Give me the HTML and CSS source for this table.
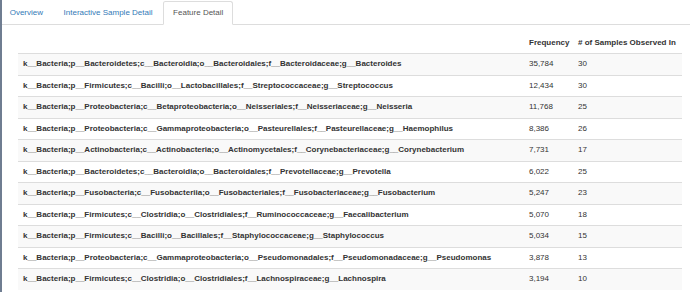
FILE: index.html
```html
<!DOCTYPE html>
<html>
<head>
<meta charset="utf-8">
<link rel="stylesheet" href="styles.css">
</head>
<body>
<div class="edge"></div>
<ul class="tabs">
  <li class="tab"><a href="#">Overview</a></li>
  <li class="tab"><a href="#">Interactive Sample Detail</a></li>
  <li class="tab active"><a href="#">Feature Detail</a></li>
</ul>
<div class="content">
  <table class="features">
    <colgroup>
      <col class="c-name">
      <col class="c-freq">
      <col class="c-samp">
    </colgroup>
    <thead>
      <tr><th></th><th>Frequency</th><th># of Samples Observed In</th></tr>
    </thead>
    <tbody>
      <tr><td class="name">k__Bacteria;p__Bacteroidetes;c__Bacteroidia;o__Bacteroidales;f__Bacteroidaceae;g__Bacteroides</td><td>35,784</td><td>30</td></tr>
      <tr><td class="name">k__Bacteria;p__Firmicutes;c__Bacilli;o__Lactobacillales;f__Streptococcaceae;g__Streptococcus</td><td>12,434</td><td>30</td></tr>
      <tr><td class="name">k__Bacteria;p__Proteobacteria;c__Betaproteobacteria;o__Neisseriales;f__Neisseriaceae;g__Neisseria</td><td>11,768</td><td>25</td></tr>
      <tr><td class="name">k__Bacteria;p__Proteobacteria;c__Gammaproteobacteria;o__Pasteurellales;f__Pasteurellaceae;g__Haemophilus</td><td>8,386</td><td>26</td></tr>
      <tr><td class="name">k__Bacteria;p__Actinobacteria;c__Actinobacteria;o__Actinomycetales;f__Corynebacteriaceae;g__Corynebacterium</td><td>7,731</td><td>17</td></tr>
      <tr><td class="name">k__Bacteria;p__Bacteroidetes;c__Bacteroidia;o__Bacteroidales;f__Prevotellaceae;g__Prevotella</td><td>6,022</td><td>25</td></tr>
      <tr><td class="name">k__Bacteria;p__Fusobacteria;c__Fusobacteriia;o__Fusobacteriales;f__Fusobacteriaceae;g__Fusobacterium</td><td>5,247</td><td>23</td></tr>
      <tr><td class="name">k__Bacteria;p__Firmicutes;c__Clostridia;o__Clostridiales;f__Ruminococcaceae;g__Faecalibacterium</td><td>5,070</td><td>18</td></tr>
      <tr><td class="name">k__Bacteria;p__Firmicutes;c__Bacilli;o__Bacillales;f__Staphylococcaceae;g__Staphylococcus</td><td>5,034</td><td>15</td></tr>
      <tr><td class="name">k__Bacteria;p__Proteobacteria;c__Gammaproteobacteria;o__Pseudomonadales;f__Pseudomonadaceae;g__Pseudomonas</td><td>3,878</td><td>13</td></tr>
      <tr><td class="name">k__Bacteria;p__Firmicutes;c__Clostridia;o__Clostridiales;f__Lachnospiraceae;g__Lachnospira</td><td>3,194</td><td>10</td></tr>
    </tbody>
  </table>
</div>
</body>
</html>
```

FILE: styles.css
```css
html, body {
  margin: 0;
  padding: 0;
  background: #fff;
}
body {
  font-family: "Liberation Sans", Arial, sans-serif;
  font-size: 8px;
  color: #333;
  overflow: hidden;
}
.edge {
  position: fixed;
  left: 0;
  top: 0;
  bottom: 0;
  width: 2px;
  background: #6f7d91;
  z-index: 5;
}
.tabs {
  list-style: none;
  margin: 1px 0 0 0;
  padding: 0;
  display: flex;
  border-bottom: 1px solid #ddd;
}
.tab {
  margin-bottom: -1px;
  margin-right: 1.2px;
}
.tab a {
  display: block;
  padding: 5.3px 8.7px;
  line-height: 11.4px;
  border: 1px solid transparent;
  border-radius: 2.5px 2.5px 0 0;
  color: #337ab7;
  text-decoration: none;
}
.tab.active a {
  color: #555;
  background: #fff;
  border-color: #ddd #ddd transparent #ddd;
}
.content {
  padding: 8px 8px 0 18px;
}
.features {
  width: 664px;
  table-layout: fixed;
  border-collapse: collapse;
  border-spacing: 0;
}
.c-name { width: 506px; }
.c-freq { width: 49px; }
.c-samp { width: 109px; }
.features th {
  text-align: left;
  font-weight: bold;
  padding: 5px 5px;
  line-height: 10.4px;
  border-bottom: 1px solid #ddd;
  vertical-align: bottom;
  white-space: nowrap;
}
.features td {
  padding: 5px 5px;
  line-height: 10.5px;
  border-top: 1px solid #ddd;
  white-space: nowrap;
  overflow: hidden;
}
.features td.name {
  font-weight: bold;
}
.features tbody tr:nth-child(odd) {
  background: #f9f9f9;
}
```
